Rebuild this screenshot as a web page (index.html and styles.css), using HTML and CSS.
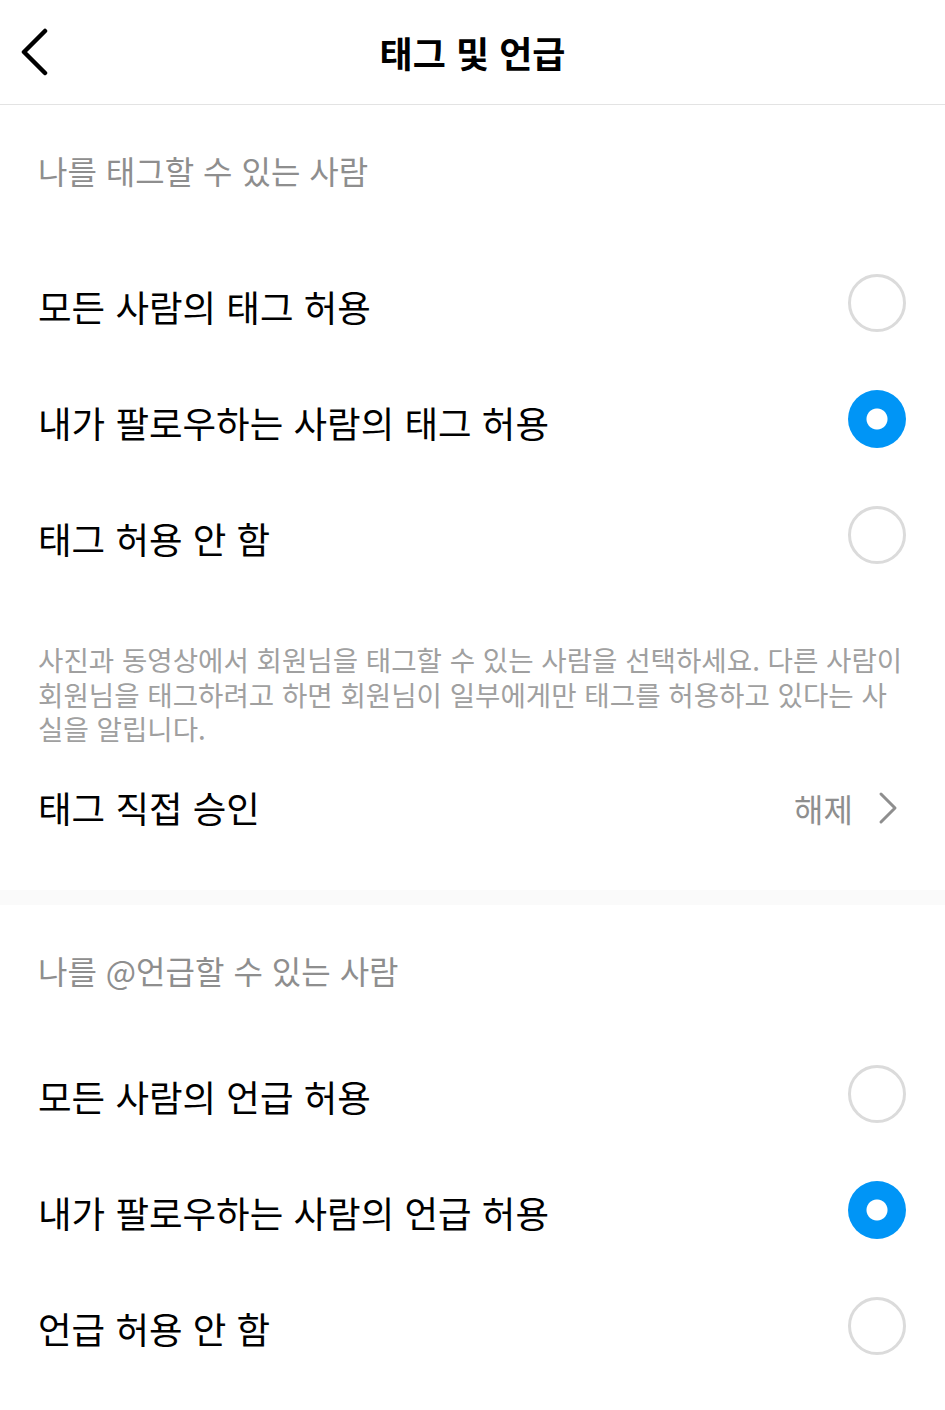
FILE: index.html
```html
<!DOCTYPE html>
<html lang="ko">

<head>
    <meta charset="UTF-8">
    <title>태그 및 언급</title>
    <link rel="stylesheet" href="styles.css">
</head>

<body>
    <div class="header">
        <div class="back">
            <svg width="30" height="48" viewBox="0 0 30 48">
                <polyline points="25,3 4,24 25,45" fill="none" stroke="#000" stroke-width="4.5" stroke-linecap="round" stroke-linejoin="round"/>
            </svg>
        </div>
        <div class="title">태그 및 언급</div>
        <div></div>
    </div>

    <div class="section">
        <div class="section-title">나를 태그할 수 있는 사람</div>
        <div class="row">
            <span class="label">모든 사람의 태그 허용</span>
            <span class="radio"></span>
        </div>
        <div class="row">
            <span class="label">내가 팔로우하는 사람의 태그 허용</span>
            <span class="radio checked"></span>
        </div>
        <div class="row">
            <span class="label">태그 허용 안 함</span>
            <span class="radio"></span>
        </div>
        <p class="desc">사진과 동영상에서 회원님을 태그할 수 있는 사람을 선택하세요. 다른 사람이 회원님을 태그하려고 하면 회원님이 일부에게만 태그를 허용하고 있다는 사실을 알립니다.</p>
        <div class="row">
            <span class="label">태그 직접 승인</span>
            <span class="value">해제
                <svg width="22" height="34" viewBox="0 0 22 34">
                    <polyline points="4,3 18,17 4,31" fill="none" stroke="#8e8e8e" stroke-width="3" stroke-linecap="round" stroke-linejoin="round"/>
                </svg>
            </span>
        </div>
    </div>

    <div class="band"></div>

    <div class="section">
        <div class="section-title second">나를 @언급할 수 있는 사람</div>
        <div class="row">
            <span class="label">모든 사람의 언급 허용</span>
            <span class="radio"></span>
        </div>
        <div class="row">
            <span class="label">내가 팔로우하는 사람의 언급 허용</span>
            <span class="radio checked"></span>
        </div>
        <div class="row">
            <span class="label">언급 허용 안 함</span>
            <span class="radio"></span>
        </div>
    </div>
</body>
</html>
```

FILE: styles.css
```css
body {
    margin: 0;
    background-color: #FFFFFF;
    font-family: "Noto Sans CJK KR", "Noto Sans", sans-serif;
    color: #000000;
}
.header {
    display: grid;
    grid-template-columns: 1fr auto 1fr;
    align-items: center;
    height: 104px;
    border-bottom: 1px solid #e3e3e3;
}
.back {
    display: flex;
    align-items: center;
    padding-left: 20px;
}
.title {
    font-size: 36px;
    font-weight: bold;
    line-height: 50px;
}
.section {
    padding: 0 38px;
}
.section-title {
    font-size: 32px;
    line-height: 50px;
    color: #8e8e8e;
    padding-top: 40px;
    padding-bottom: 53px;
}
.section-title.second {
    padding-bottom: 44px;
}
.row {
    display: flex;
    align-items: center;
    justify-content: space-between;
    height: 116px;
}
.label {
    font-size: 36.5px;
}
.radio {
    width: 58px;
    height: 58px;
    box-sizing: border-box;
    border: 3px solid #dbdbdb;
    border-radius: 50%;
    margin-right: 1px;
    margin-bottom: 6px;
}
.radio.checked {
    border: none;
    background: radial-gradient(circle, #FFFFFF 10px, #0095f6 11px);
}
.desc {
    margin: 46px 0 4px;
    font-size: 27.6px;
    line-height: 34.5px;
    color: #a0a0a0;
}
.value {
    display: flex;
    align-items: center;
    gap: 24px;
    font-size: 32px;
    color: #8e8e8e;
    margin-right: 8px;
}
.band {
    height: 15px;
    margin-top: 24px;
    background-color: #fafafa;
}
```
